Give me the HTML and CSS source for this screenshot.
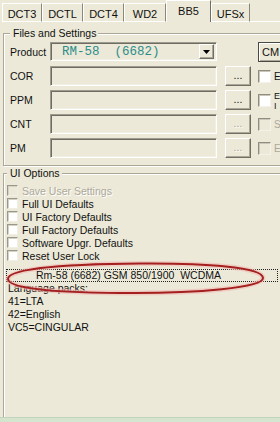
FILE: index.html
```html
<!DOCTYPE html>
<html>
<head>
<meta charset="utf-8">
<link rel="stylesheet" href="styles.css">
</head>
<body>
<div class="page">
  <div class="tabs">
    <div class="tab t1">DCT3</div>
    <div class="tab t2">DCTL</div>
    <div class="tab t3">DCT4</div>
    <div class="tab t4">WD2</div>
    <div class="tab t5 sel">BB5</div>
    <div class="tab t6">UFSx</div>
    <div class="tab-rest"></div>
  </div>

  <fieldset class="group g1">
    <legend>Files and Settings</legend>
    <div class="grid">
      <span class="lbl">Product</span>
      <div class="combo"><span class="combo-text">RM-58  (6682)</span><span class="drop"><svg width="7" height="4" viewBox="0 0 7 4"><path d="M0 0h7L3.5 4z" fill="#000"/></svg></span></div>
      <span></span>
      <div class="cm">CM</div>

      <span class="lbl">COR</span>
      <div class="field"></div>
      <div class="btn">...</div>
      <span class="cb"></span>
      <span class="side">E</span>

      <span class="lbl">PPM</span>
      <div class="field"></div>
      <div class="btn">...</div>
      <span class="cb"></span>
      <span class="side two">E<br>I</span>

      <span class="lbl">CNT</span>
      <div class="field"></div>
      <div class="btn dis">...</div>
      <span class="cb dis"></span>
      <span class="side gray">S</span>

      <span class="lbl">PM</span>
      <div class="field"></div>
      <div class="btn dis">...</div>
      <span class="cb dis"></span>
      <span class="side gray">E</span>
    </div>
  </fieldset>

  <fieldset class="group g2">
    <legend>UI Options</legend>
    <ul class="checks">
      <li class="off"><span class="box"></span>Save User Settings</li>
      <li><span class="box"></span>Full UI Defaults</li>
      <li><span class="box"></span>UI Factory Defaults</li>
      <li><span class="box"></span>Full Factory Defaults</li>
      <li><span class="box"></span>Software Upgr. Defaults</li>
      <li><span class="box"></span>Reset User Lock</li>
    </ul>
    <ul class="list">
      <li class="focus">Rm-58 (6682) GSM 850/1900  WCDMA</li>
      <li>Language packs:</li>
      <li>41=LTA</li>
      <li>42=English</li>
      <li>VC5=CINGULAR</li>
    </ul>
  </fieldset>
  <div class="footer"></div>

  <svg class="mark" width="280" height="422" viewBox="0 0 280 422">
    <path d="M8 279 C8 268 70 264 140 263.5 C205 263 263 267 263 278 C263 288 195 293 135 293 C70 293 8 290 8 279 Z" fill="none" stroke="#f2b9b4" stroke-width="5" opacity="0.6"/>
    <path d="M8 279 C8 268 70 264 140 263.5 C205 263 263 267 263 278 C263 288 195 293 135 293 C70 293 8 290 8 279 Z" fill="none" stroke="#a3201f" stroke-width="2"/>
  </svg>
</div>
</body>
</html>
```

FILE: styles.css
```css
html, body {
  margin: 0;
  padding: 0;
}
body {
  background: #ece9d8;
  font-family: "Liberation Sans", Arial, sans-serif;
  font-size: 10.5px;
  color: #111;
  overflow: hidden;
}
.page {
  position: relative;
  width: 280px;
  height: 422px;
  overflow: hidden;
  display: flex;
  flex-direction: column;
}

/* tabs */
.tabs {
  display: flex;
  align-items: flex-end;
  height: 22px;
  padding-left: 2px;
  flex: none;
  box-sizing: border-box;
}
.tab {
  box-sizing: border-box;
  height: 19px;
  border-top: 1px solid #fff;
  border-left: 1px solid #fff;
  border-right: 1px solid #8a887b;
  border-bottom: 1px solid #fff;
  font-size: 11px;
  text-align: center;
  line-height: 18px;
  padding-top: 1px;
}
.t1 { width: 40px; }
.t2 { width: 41px; }
.t3 { width: 41px; }
.t4 { width: 42px; }
.t5 { width: 45px; }
.t6 { width: 39px; }
.tab.sel {
  height: 22px;
  border-bottom: none;
  line-height: 20px;
  padding-top: 0;
  border-right-color: #716f64;
}
.tab-rest {
  flex: 1;
  height: 1px;
  background: #fff;
}

/* group boxes */
.group {
  margin: 0 0 0 3px;
  width: 330px;
  box-sizing: border-box;
  border: 1px solid #aca899;
  box-shadow: inset 1px 1px 0 #fff, 1px 1px 0 #fff;
  min-width: 0;
}
.group legend {
  padding: 0 2px 0 3px;
  line-height: 12px;
  background: #ece9d8;
}
.g1 {
  margin-top: 5px;
  padding: 3px 0 7px 6px;
  flex: none;
}
.g2 {
  margin-top: 1px;
  padding: 5px 0 0 3px;
  border-bottom: none;
  flex: 1;
}

.grid {
  display: grid;
  grid-template-columns: 40px 175px 33px 15px 40px;
  grid-auto-rows: 20px;
  row-gap: 4px;
  align-items: center;
}
.lbl {
  font-size: 10.5px;
}
.combo, .field {
  box-sizing: border-box;
  width: 167px;
  height: 20px;
  border-top: 1px solid #9d9b8d;
  border-left: 1px solid #9d9b8d;
  border-right: 1px solid #fff;
  border-bottom: 1px solid #fff;
  box-shadow: inset 1px 1px 0 #6f6d62, inset -1px -1px 0 #f1efe2;
}
.combo {
  height: 19px;
  display: flex;
  align-items: center;
  justify-content: space-between;
  align-self: start;
}
.combo-text {
  font-family: "Liberation Mono", "Courier New", monospace;
  font-size: 12.5px;
  color: #2c8d8b;
  white-space: pre;
  padding-left: 11px;
}
.drop {
  box-sizing: border-box;
  width: 15px;
  height: 15px;
  margin-right: 2px;
  border-top: 1px solid #fff;
  border-left: 1px solid #fff;
  border-right: 1px solid #716f64;
  border-bottom: 1px solid #716f64;
  box-shadow: inset -1px -1px 0 #aca899;
  display: flex;
  align-items: center;
  justify-content: center;
}
.cm {
  grid-column: 4 / 6;
  box-sizing: border-box;
  height: 20px;
  border: 1px solid #4a4a44;
  box-shadow: inset 1px 1px 0 #fff, inset -1px -1px 0 #aca899;
  font-size: 11px;
  line-height: 18px;
  padding-left: 3px;
  white-space: nowrap;
  overflow: hidden;
}
.btn {
  box-sizing: border-box;
  width: 26px;
  height: 20px;
  border-top: 1px solid #fff;
  border-left: 1px solid #fff;
  border-right: 1px solid #716f64;
  border-bottom: 1px solid #716f64;
  box-shadow: inset -1px -1px 0 #aca899;
  text-align: center;
  line-height: 16px;
  font-size: 10.5px;
}
.btn.dis {
  color: #aca899;
  text-shadow: 1px 1px 0 #fff;
}
.cb {
  box-sizing: border-box;
  width: 13px;
  height: 13px;
  background: #fff;
  border-top: 1px solid #8f8d80;
  border-left: 1px solid #8f8d80;
  border-right: 1px solid #f4f2e8;
  border-bottom: 1px solid #f4f2e8;
  box-shadow: inset 1px 1px 0 #c9c7ba;
}
.cb.dis {
  background: #ece9d8;
}
.side {
  padding-left: 1px;
  white-space: nowrap;
  font-size: 10px;
}
.side.two {
  font-size: 9px;
  line-height: 10px;
  padding-top: 2px;
}
.side.gray {
  color: #aca899;
}

/* UI options */
.checks {
  list-style: none;
  margin: 0;
  padding: 0;
}
.checks li {
  display: flex;
  align-items: center;
  gap: 4px;
  height: 13px;
  white-space: nowrap;
}
.box {
  box-sizing: border-box;
  width: 11px;
  height: 11px;
  background: #fff;
  border-top: 1px solid #9a988a;
  border-left: 1px solid #9a988a;
  border-right: 1px solid #f1efe4;
  border-bottom: 1px solid #f1efe4;
  box-shadow: inset 1px 1px 0 #d4d2c4;
}
.checks li.off {
  color: #aca899;
  text-shadow: 1px 1px 0 #fff;
}
.checks li.off .box {
  background: #ece9d8;
}

.list {
  list-style: none;
  margin: 7px 0 0 -1px;
  padding: 0;
  width: 272px;
}
.list li {
  height: 13px;
  line-height: 13px;
  padding-left: 2px;
  white-space: pre;
}
.list li.focus {
  box-sizing: border-box;
  border: 1px dotted #222;
  line-height: 11px;
  padding-left: 29px;
}

.footer {
  flex: none;
  height: 5px;
  background: #d4e4cd;
  border-top: 1px solid #c2d4bb;
  box-sizing: border-box;
}

.mark {
  position: absolute;
  left: 0;
  top: 0;
  pointer-events: none;
}
```
